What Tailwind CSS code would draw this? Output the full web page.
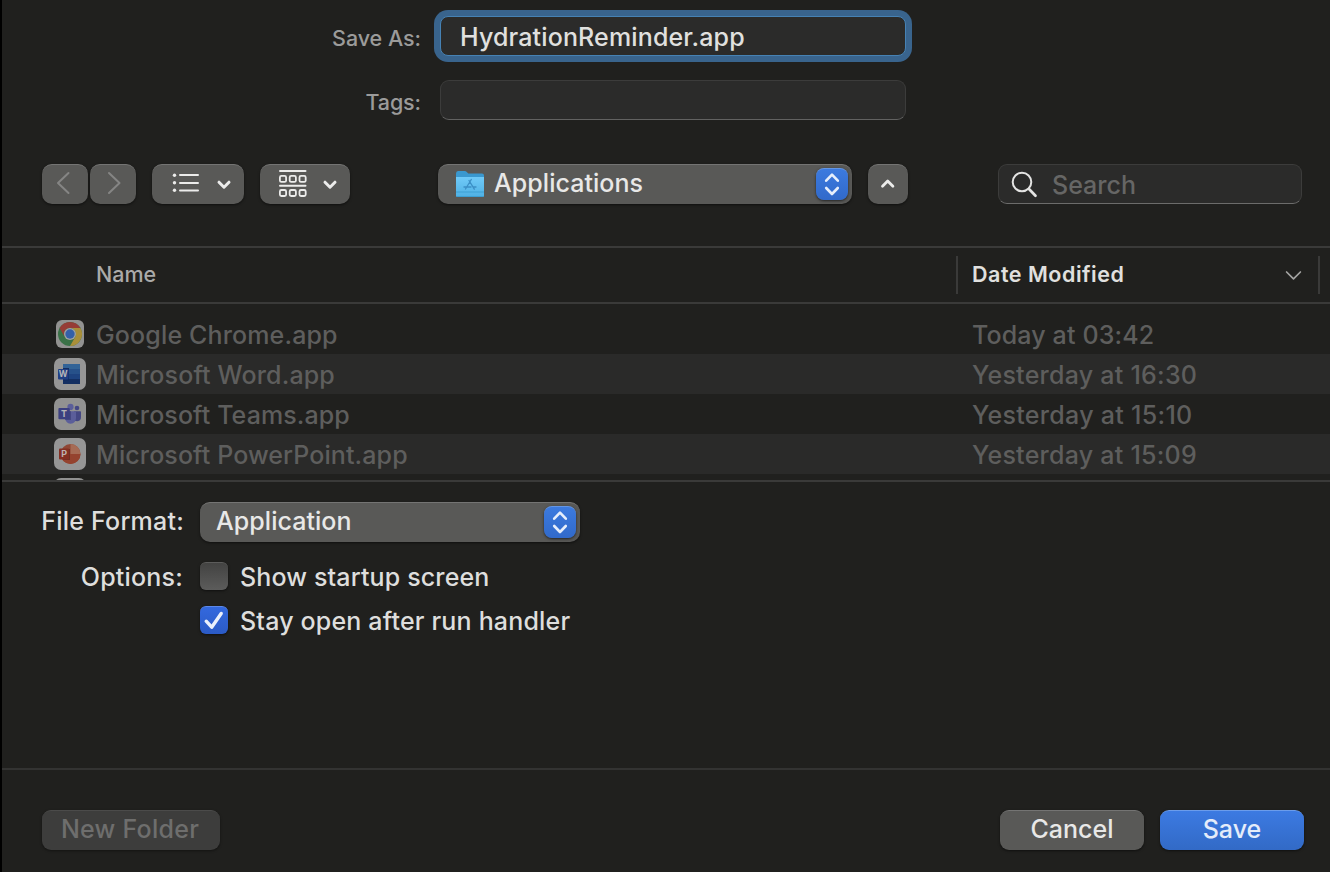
<!DOCTYPE html>
<html lang="en">
<head>
<meta charset="utf-8">
<title>Save</title>
<script src="https://cdn.jsdelivr.net/npm/@tailwindcss/browser@4"></script>
</head>
<body class="bg-[#20201e]">
<main class="flex h-[872px] w-[1330px] flex-col overflow-hidden border-l-2 border-black bg-[#20201e] font-['Inter','Liberation_Sans',sans-serif] text-[25px] leading-10 font-[450] tracking-[0.14px] whitespace-nowrap text-[#dededd]">

  <!-- Name and tags -->
  <section class="flex h-[164px] shrink-0 flex-col gap-6 pt-4">
    <div class="flex h-10 items-center">
      <label class="w-[419px] pt-1 text-right text-[21.5px] tracking-[-0.05px] text-[#9b9b9a]">Save As:</label>
      <div class="ml-[19px] h-10 w-[466px] rounded-[8px] border border-[#4682b4] bg-[#2b2b2a] pl-[19px] leading-[40px] text-[#e0e0df] ring-[6px] ring-[#39648d]">HydrationReminder.app</div>
    </div>
    <div class="flex h-10 items-center">
      <label class="w-[419px] pt-1 text-right text-[21.5px] tracking-[-0.1px] text-[#9b9b9a]">Tags:</label>
      <div class="ml-[19px] h-10 w-[466px] rounded-[9px] border border-[#3c3c3b] border-b-[#626261] bg-[#2b2b2a]"></div>
    </div>
  </section>

  <!-- Toolbar -->
  <section class="flex h-[82px] shrink-0 items-start pl-10">
    <div class="flex gap-[2px]">
      <div class="h-10 w-[46px] rounded-[10px] border-t border-[#747473] bg-[#595957] shadow-sm shadow-black/40">
        <svg class="-mt-px h-10 w-[46px]" viewBox="0 0 46 40" fill="none" stroke="#858584" stroke-width="2" stroke-linecap="round" stroke-linejoin="round"><path d="M26.500 9 16 19l10.500 10"/></svg>
      </div>
      <div class="h-10 w-[46px] rounded-[10px] border-t border-[#747473] bg-[#595957] shadow-sm shadow-black/40">
        <svg class="-mt-px h-10 w-[46px]" viewBox="0 0 46 40" fill="none" stroke="#858584" stroke-width="2" stroke-linecap="round" stroke-linejoin="round"><path d="M19 9l10.500 10L19 29"/></svg>
      </div>
    </div>
    <div class="ml-4 h-10 w-[92px] rounded-[10px] border-t border-[#747473] bg-[#595957] shadow-sm shadow-black/40">
      <svg class="-mt-px h-10 w-[92px]" viewBox="0 0 92 40" fill="none" stroke="#ececeb" stroke-width="2" stroke-linecap="round" stroke-linejoin="round"><g fill="#ececeb" stroke="none"><circle cx="22.500" cy="11.200" r="1.700"/><circle cx="22.500" cy="18.700" r="1.700"/><circle cx="22.500" cy="26.300" r="1.700"/></g><path d="M28 11h18M28 19h18M28 26.500h18"/><path stroke-width="3" d="M67 18.200l5 5 5-5"/></svg>
    </div>
    <div class="ml-4 h-10 w-[90px] rounded-[10px] border-t border-[#747473] bg-[#595957] shadow-sm shadow-black/40">
      <svg class="-mt-px h-10 w-[90px]" viewBox="0 0 90 40" fill="none" stroke="#ececeb" stroke-width="2" stroke-linecap="round" stroke-linejoin="round"><path d="M20 7h25.500M20 21.700h25.500"/><g stroke-width="1.800"><rect x="19.900" y="11.900" width="6.200" height="6" rx="1.500"/><rect x="29.700" y="11.900" width="6.200" height="6" rx="1.500"/><rect x="39.500" y="11.900" width="6.200" height="6" rx="1.500"/><rect x="19.900" y="26" width="6.200" height="6" rx="1.500"/><rect x="29.700" y="26" width="6.200" height="6" rx="1.500"/><rect x="39.500" y="26" width="6.200" height="6" rx="1.500"/></g><path stroke-width="3" d="M65 18.200l5 5 5-5"/></svg>
    </div>
    <div class="ml-[88px] flex h-10 w-[414px] items-start rounded-[10px] border-t border-[#747473] bg-[#595957] pr-1 pl-4 shadow-sm shadow-black/40">
      <svg class="mt-[3px] h-8 w-8" viewBox="0 0 32 32" fill="none">
        <defs><linearGradient id="folder" x1="0" y1="0" x2="0" y2="1"><stop offset="0" stop-color="#70caf8"/><stop offset="1" stop-color="#4fb0e4"/></linearGradient></defs>
        <path d="M2 5.500Q2 3 4 3h6.500Q12 3 13 4.200L14.300 5.600H28Q30 5.600 30 7.500V27H2z" fill="#3a98cf"/>
        <path d="M2 9h28v18.500Q30 29 28.500 29h-25Q2 29 2 27.500z" fill="url(#folder)"/>
        <path d="M2 24h28M2.500 28.500h27" stroke="#3d9fd3"/>
        <path d="M15 12.500l5.300 8.700M17.300 11.500 11.500 21M10 19h7M19 19h3" stroke="#3b8fc6" stroke-width="1.300" stroke-linecap="round"/>
      </svg>
      <span class="ml-2 flex-1 leading-[37px] tracking-[0.05px] text-[#e8e8e7]">Applications</span>
      <svg class="mt-[3px] h-8 w-8 rounded-[8px] border-t border-[#6396e6] bg-linear-to-b from-[#3c7adf] to-[#316aca] shadow-sm shadow-black/50" viewBox="0 0.5 32 31" fill="none" stroke="#e6eefb" stroke-width="2.600" stroke-linecap="round" stroke-linejoin="round"><path d="M10.200 12.200l5.800-6 5.800 6M10.200 19.500l5.800 6 5.800-6"/></svg>
    </div>
    <div class="ml-4 h-10 w-10 rounded-[10px] border-t border-[#747473] bg-[#595957] shadow-sm shadow-black/40">
      <svg class="-mt-px h-10 w-10" viewBox="0 0 40 40" fill="none" stroke="#ececeb" stroke-width="2.800" stroke-linecap="round" stroke-linejoin="round"><path d="M14.500 22.200l5.200-5.200 5.200 5.200"/></svg>
    </div>
    <div class="ml-[90px] flex h-10 w-[304px] rounded-[9px] border border-[#3c3c3b] border-b-[#6c6c6b] bg-[#2b2b2a] pl-3">
      <svg class="h-10 w-7" viewBox="0 0 28 40" fill="none" stroke="#e4e4e3" stroke-linecap="round"><circle cx="11" cy="17" r="9.300" stroke-width="2"/><path stroke-width="2.700" d="M18 24l6.500 6.700"/></svg>
      <span class="ml-[13px] leading-[41px] tracking-normal text-[#666665]">Search</span>
    </div>
  </section>

  <!-- Column headings -->
  <section class="flex h-[58px] shrink-0 items-center border-y-2 border-[#3a3a39] text-[21.5px]">
    <span class="w-[954px] pb-[2px] pl-[94px] tracking-normal text-[#aaaaa9]">Name</span>
    <span class="h-[38px] w-[2px] bg-[#3a3a39]"></span>
    <span class="flex-1 pb-[2px] pl-[14px] font-semibold tracking-[0.52px] text-[#e0e0df]">Date Modified</span>
    <svg class="mr-4 h-3 w-[18px]" viewBox="0 0 18 12" fill="none" stroke="#a4a4a3" stroke-width="1.700" stroke-linecap="round" stroke-linejoin="round"><path d="M2.600 3l6.900 6.800L16.400 3"/></svg>
    <span class="mr-[10px] h-[38px] w-[2px] bg-[#3a3a39]"></span>
  </section>

  <!-- File list -->
  <section class="flex h-[178px] shrink-0 flex-col overflow-hidden border-b-2 border-[#3a3a39] pt-[10px] text-[#5e5e5d]">
    <div class="flex h-10 shrink-0 items-center pl-[52px]">
      <svg class="h-8 w-8" viewBox="0 0 32 32"><rect x="2" y="2" width="28" height="28" rx="6" fill="#929291"/><circle cx="16" cy="16" r="12" fill="#3a7147"/><path d="M5.600 10A12 12 0 0 1 26.400 10H16a6 6 0 0 0-5.200 9z" fill="#963c36"/><path d="M26.400 10A12 12 0 0 1 16 28l5.200-9A6 6 0 0 0 16 10z" fill="#a98f39"/><circle cx="16" cy="16" r="6" fill="#a3a3a2"/><circle cx="16" cy="16" r="4.700" fill="#3460a8"/></svg>
      <span class="ml-[10px] w-[876px] pt-[2px]">Google Chrome.app</span><span class="pt-[2px]">Today at 03:42</span>
    </div>
    <div class="flex h-10 shrink-0 items-center bg-[#2a2a29] pl-[52px]">
      <svg class="h-8 w-8" viewBox="0 0 32 32"><rect width="32" height="32" rx="7" fill="#969696"/><path d="M9 6h17v5H9z" fill="#326397"/><path d="M9 11h17v5H9z" fill="#27518a"/><path d="M9 16h17v5H9z" fill="#1e4380"/><path d="M9 21h17v5H9z" fill="#142f62"/><path d="M9 10h6v13H9z" fill="#122c60"/><rect x="4" y="11" width="10.500" height="10.500" rx="1" fill="#203f83"/><text x="9.200" y="19.300" text-anchor="middle" font-size="8.500" font-weight="700" letter-spacing="0" fill="#b5b5b8">W</text></svg>
      <span class="ml-[10px] w-[876px] pt-[2px]">Microsoft Word.app</span><span class="pt-[2px] tracking-[0.25px]">Yesterday at 16:30</span>
    </div>
    <div class="flex h-10 shrink-0 items-center pl-[52px]">
      <svg class="h-8 w-8" viewBox="0 0 32 32"><rect width="32" height="32" rx="7" fill="#929291"/><circle cx="23" cy="10" r="2.300" fill="#444783"/><path d="M20 13.300h6.200q.8 0 .8.800V19q0 3.700-3.500 4.200-2.500 0-3.500-1z" fill="#444783"/><circle cx="16.500" cy="8.900" r="3.100" fill="#5b5e9a"/><path d="M11 13.300h10.200q.8 0 .8.800V20q0 5.200-5.500 5.700-5-.3-5.500-5.700z" fill="#5b5e9a"/><path d="M11 13.300h6V22h-5.700z" fill="#454882"/><rect x="4.400" y="10" width="11.400" height="11.300" rx="1" fill="#3c4080"/><text x="10.100" y="18.900" text-anchor="middle" font-size="9" font-weight="700" letter-spacing="0" fill="#b5b5b8">T</text></svg>
      <span class="ml-[10px] w-[876px] pt-[2px] tracking-[0.1px]">Microsoft Teams.app</span><span class="pt-[2px] tracking-[0.3px]">Yesterday at 15:10</span>
    </div>
    <div class="flex h-10 shrink-0 items-center bg-[#2a2a29] pl-[52px]">
      <svg class="h-8 w-8" viewBox="0 0 32 32"><rect width="32" height="32" rx="7" fill="#969696"/><circle cx="16.500" cy="16" r="10" fill="#8f4735"/><path d="M16.500 6a10 10 0 0 1 10 10h-10z" fill="#a66b55"/><path d="M6.500 16h20a10 10 0 0 1-20 0z" fill="#95432f"/><path d="M9 11h7v11H9z" fill="#6f2f22"/><rect x="5" y="10.500" width="10" height="11" rx="1" fill="#832f22"/><text x="10.200" y="19.200" text-anchor="middle" font-size="9" font-weight="700" letter-spacing="0" fill="#bdb3b0">P</text></svg>
      <span class="ml-[10px] w-[876px] pt-[2px] tracking-[0.1px]">Microsoft PowerPoint.app</span><span class="pt-[2px] tracking-[0.25px]">Yesterday at 15:09</span>
    </div>
    <div class="flex h-10 shrink-0 items-center pl-[52px]">
      <svg class="h-8 w-8" viewBox="0 0 32 32"><rect width="32" height="32" rx="7" fill="#929291"/></svg>
    </div>
  </section>

  <!-- Export options -->
  <section class="h-[288px] shrink-0 border-b-2 border-[#333332] pt-5">
    <div class="flex h-10">
      <span class="w-[182px] text-right leading-[39px] tracking-[0.22px]">File Format:</span>
      <div class="ml-4 flex h-10 w-[380px] items-start rounded-[10px] border-t border-[#747473] bg-[#595957] pr-1 pl-4 shadow-sm shadow-black/40">
        <span class="flex-1 leading-[37px] tracking-[0.05px] text-[#e8e8e7]">Application</span>
        <svg class="mt-[3px] h-8 w-8 rounded-[8px] border-t border-[#6396e6] bg-linear-to-b from-[#3c7adf] to-[#316aca] shadow-sm shadow-black/50" viewBox="0 0.5 32 31" fill="none" stroke="#e6eefb" stroke-width="2.600" stroke-linecap="round" stroke-linejoin="round"><path d="M10.200 12.200l5.800-6 5.800 6M10.200 19.500l5.800 6 5.800-6"/></svg>
      </div>
    </div>
    <div class="mt-[14px] flex h-10 items-center">
      <span class="w-[182px] pt-[2px] pr-px text-right tracking-[0.2px]">Options:</span>
      <span class="ml-4 h-7 w-7 rounded-[6px] border-t border-[#5c5c5b] bg-linear-to-b from-[#434342] to-[#5c5c5b] shadow-sm shadow-black/40"></span>
      <span class="ml-3 pt-[2px]">Show startup screen</span>
    </div>
    <div class="mt-1 flex h-10 items-center">
      <svg class="ml-[198px] h-7 w-7 rounded-[6px] border-t border-[#5c88e8] bg-linear-to-b from-[#3368de] to-[#2b5bc6] shadow-sm shadow-black/40" viewBox="0 0.5 28 27" fill="none" stroke="#eaf0fc" stroke-width="3.400" stroke-linecap="round" stroke-linejoin="round"><path d="M6.200 14.700l5.500 6L21.200 7"/></svg>
      <span class="ml-3 pt-[2px] tracking-[0.18px]">Stay open after run handler</span>
    </div>
  </section>

  <!-- Actions -->
  <footer class="flex h-[102px] items-start pt-10 pl-10 text-center leading-[37px]">
    <div class="h-10 w-[178px] rounded-[9px] border-t border-[#4b4b4a] bg-[#3d3d3c] pr-[2px] tracking-[0.25px] text-[#6e6e6d] shadow-sm shadow-black/30">New Folder</div>
    <div class="ml-[780px] h-10 w-36 rounded-[9px] border-t border-[#747473] bg-[#595957] tracking-normal text-[#e8e8e7] shadow-sm shadow-black/40">Cancel</div>
    <div class="ml-4 h-10 w-36 rounded-[9px] border-t border-[#6b9ceb] bg-linear-to-b from-[#3c7ae2] to-[#326ac6] tracking-normal text-[#e4ecfa] shadow-sm shadow-black/40">Save</div>
  </footer>
</main>
</body>
</html>
